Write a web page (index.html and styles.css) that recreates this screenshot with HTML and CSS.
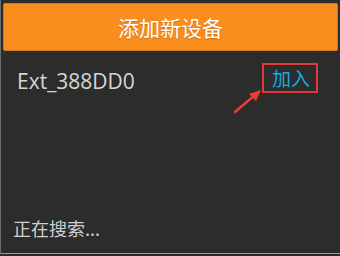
FILE: index.html
```html
<!DOCTYPE html>
<html lang="zh">
<head>
<meta charset="utf-8">
<link rel="stylesheet" href="styles.css">
</head>
<body>
<div class="screen">
  <div class="title-bar">添加新设备</div>
  <div class="device-row">
    <span class="device-name">Ext_388DD0</span>
    <span class="join">加入</span>
    <svg class="arrow" width="30" height="26" viewBox="0 0 30 26">
      <line x1="2" y1="24" x2="22" y2="7" stroke="#f03a32" stroke-width="2.4" stroke-linecap="round"/>
      <polygon points="28,2 16,6 23,13" fill="#f03a32"/>
    </svg>
  </div>
  <div class="spacer"></div>
  <div class="status">正在搜索...</div>
</div>
</body>
</html>
```

FILE: styles.css
```css
html, body {
  margin: 0;
  padding: 0;
  width: 340px;
  height: 256px;
  background: #2b2b2b;
  overflow: hidden;
}
.screen {
  box-sizing: border-box;
  width: 340px;
  height: 254px;
  border-left: 1px solid #6a6a6a;
  border-bottom: 1px solid #9a9a9a;
  background: #2c2c2c;
  display: flex;
  flex-direction: column;
  padding: 3px 2px 0 2px;
  font-family: "Noto Sans CJK SC", "Open Sans", sans-serif;
}
.title-bar {
  height: 48px;
  box-sizing: border-box;
  background: #f98d1e;
  border: 1px solid #d9771a;
  border-radius: 2px;
  color: #ffffff;
  font-size: 21px;
  display: flex;
  align-items: center;
  justify-content: center;
  text-shadow: 0 1px 1px rgba(120, 60, 0, 0.35);
}
.device-row {
  position: relative;
  display: flex;
  align-items: center;
  justify-content: space-between;
  padding: 11px 20px 0 14px;
  height: 31px;
}
.device-name {
  font-family: "Open Sans", "Noto Sans", sans-serif;
  font-size: 21px;
  color: #d6d6d6;
  position: relative;
  top: 3px;
}
.join {
  box-sizing: border-box;
  height: 30px;
  width: 56px;
  border: 2px solid #e0393b;
  color: #1aa8e2;
  font-size: 19px;
  display: flex;
  align-items: center;
  justify-content: center;
  padding-left: 2px;
}
.arrow {
  position: absolute;
  left: 230px;
  top: 37px;
}
.spacer {
  flex: 1;
}
.status {
  padding: 0 0 12px 10px;
  font-size: 18px;
  color: #cfcfcf;
}
```
